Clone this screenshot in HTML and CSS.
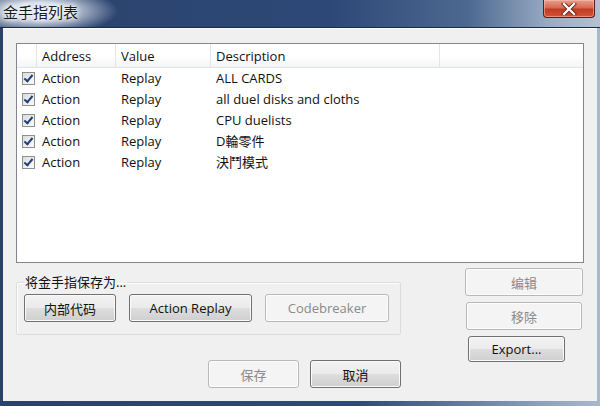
FILE: index.html
```html
<!DOCTYPE html>
<html lang="zh">
<head>
    <meta charset="UTF-8">
    <title>金手指列表</title>
    <link rel="stylesheet" href="styles.css">
</head>
<body>
    <div class="window">
        <div class="titlebar">
            <span class="title">金手指列表</span>
            <button class="close" aria-label="关闭">
                <svg width="16" height="12" viewBox="0 0 16 12">
                    <path d="M3 1 L13 11 M13 1 L3 11" stroke="#5a1a12" stroke-width="4" stroke-linecap="square"/>
                    <path d="M3 1 L13 11 M13 1 L3 11" stroke="#fff" stroke-width="2.4" stroke-linecap="square"/>
                </svg>
            </button>
        </div>

        <div class="client">
            <div class="list">
                <div class="list-head">
                    <div class="col col-check"></div>
                    <div class="col col-addr">Address</div>
                    <div class="col col-value">Value</div>
                    <div class="col col-desc">Description</div>
                    <div class="col col-rest"></div>
                </div>
                <div class="list-body" id="listBody"></div>
            </div>

            <div class="lower">
                <div class="lower-left">
                    <fieldset class="save-group">
                        <legend>将金手指保存为...</legend>
                        <button class="btn w-internal">内部代码</button>
                        <button class="btn w-ar">Action Replay</button>
                        <button class="btn w-cb" disabled>Codebreaker</button>
                    </fieldset>
                    <div class="dialog-actions">
                        <button class="btn w-small" disabled>保存</button>
                        <button class="btn w-small">取消</button>
                    </div>
                </div>
                <div class="side">
                    <button class="btn w-edit" disabled>编辑</button>
                    <button class="btn w-remove" disabled>移除</button>
                    <button class="btn w-export">Export...</button>
                </div>
            </div>
        </div>
    </div>

    <script>
        const cheats = [
            ['Action', 'Replay', 'ALL CARDS'],
            ['Action', 'Replay', 'all duel disks and cloths'],
            ['Action', 'Replay', 'CPU duelists'],
            ['Action', 'Replay', 'D輪零件'],
            ['Action', 'Replay', '決鬥模式']
        ];

        const body = document.getElementById('listBody');
        cheats.forEach(([addr, value, desc]) => {
            const row = document.createElement('div');
            row.className = 'row';
            row.innerHTML = `
                <div class="col col-check"><span class="check"></span></div>
                <div class="col col-addr">${addr}</div>
                <div class="col col-value">${value}</div>
                <div class="col col-desc">${desc}</div>`;
            body.appendChild(row);
        });
    </script>
</body>
</html>
```

FILE: styles.css
```css
body {
    margin: 0;
    width: 600px;
    height: 406px;
    overflow: hidden;
    font-family: 'Open Sans', 'Noto Sans CJK SC', sans-serif;
    font-size: 13px;
    color: #111;
}

.window {
    width: 600px;
    height: 406px;
    box-sizing: border-box;
    background: linear-gradient(90deg, #2a416b 0%, #2e4a78 60%, #8aa0bc 90%, #a9b9cc 100%);
    padding: 0 3px 5px 3px;
    display: flex;
    flex-direction: column;
}

.titlebar {
    height: 27px;
    display: flex;
    align-items: flex-start;
    justify-content: space-between;
    background:
        radial-gradient(ellipse 80px 24px at 38px 11px, rgba(225, 232, 240, 0.95) 35%, rgba(225, 232, 240, 0) 100%),
        linear-gradient(90deg, #2b426c 0%, #2d4877 55%, #4d6890 78%, #9aaec6 92%, #b3c1d2 100%);
    margin: 0 -3px;
    border-bottom: 1px solid #1b2b44;
}

.title {
    font-family: 'Noto Sans CJK SC', sans-serif;
    font-size: 15px;
    line-height: 20px;
    padding: 2px 0 0 3px;
    color: #1a1a1a;
    text-shadow: 0 0 6px #fff, 0 0 4px #fff;
}

.close {
    width: 52px;
    height: 18px;
    margin-right: 5px;
    padding: 0;
    border: 1px solid #5a1e18;
    border-top: none;
    border-radius: 0 0 4px 4px;
    background: linear-gradient(#e8a08c 0%, #d46a52 45%, #c33a22 55%, #d0543a 100%);
    display: flex;
    align-items: center;
    justify-content: center;
    box-shadow: inset 0 0 0 1px rgba(255, 200, 190, 0.5);
}

.client {
    flex: 1;
    background: #f0f0f0;
    border-top: 1px solid #fafafa;
    padding: 14px 13px 0 13px;
}

/* list view */
.list {
    height: 220px;
    box-sizing: border-box;
    border: 1px solid #82878f;
    background: #fff;
}

.list-head {
    display: flex;
    height: 23px;
    background: linear-gradient(#ffffff 0%, #ffffff 50%, #f4f5f6 100%);
    border-bottom: 1px solid #e1e3e6;
}

.list-head .col {
    border-right: 1px solid #e3e5e7;
    line-height: 21px;
    padding-top: 2px;
    padding-left: 5px;
}

.list-head .col-rest {
    border-right: none;
    flex: 1;
}

.col {
    box-sizing: border-box;
    white-space: nowrap;
}

.col-check { width: 20px; padding-left: 0 !important; }
.col-addr { width: 79px; }
.col-value { width: 95px; }
.col-desc { width: 229px; }

.row {
    display: flex;
    height: 21px;
    line-height: 21px;
}

.row .col { padding-left: 5px; }
.row .col-check {
    padding-left: 5px !important;
    display: flex;
    align-items: center;
}

.check {
    width: 11px;
    height: 11px;
    border: 1px solid #8e8f8f;
    background: linear-gradient(135deg, #dcdcdc, #fbfbfb);
    position: relative;
}

.check::after {
    content: '';
    position: absolute;
    left: 3px;
    top: 0px;
    width: 3px;
    height: 7px;
    border: solid #1e3f7a;
    border-width: 0 2px 2px 0;
    transform: rotate(40deg);
}

/* lower area */
.lower {
    display: flex;
    gap: 64px;
}

.lower-left {
    width: 385px;
}

.save-group {
    margin: 11px 0 0 0;
    padding: 0 0 12px 7px;
    border: 1px solid #dcdcdc;
    box-shadow: 1px 1px 0 #fff inset;
    border-radius: 2px;
    display: flex;
    gap: 13px;
    height: 61px;
    box-sizing: border-box;
    align-items: flex-end;
}

.save-group legend {
    padding: 0 1px;
    margin-left: 0;
    font-size: 13px;
    line-height: 16px;
}

.dialog-actions {
    display: flex;
    justify-content: flex-end;
    gap: 11px;
    margin-top: 25px;
}

.side {
    display: flex;
    flex-direction: column;
    align-items: flex-start;
    gap: 6px;
    padding-top: 5px;
    width: 118px;
}

.btn {
    font-family: 'Open Sans', 'Noto Sans CJK SC', sans-serif;
    font-size: 13px;
    color: #111;
    height: 28px;
    padding: 0;
    border: 1px solid #707070;
    border-radius: 3px;
    background: linear-gradient(#f2f2f2 0%, #ebebeb 48%, #dddddd 52%, #cfcfcf 100%);
    box-shadow: inset 0 0 0 1px #fbfbfb;
}

.btn:disabled {
    color: #8a8a8a;
    border-color: #b5b9bc;
    background: #f4f4f4;
    box-shadow: inset 0 0 0 1px #fdfdfd;
}

.w-internal { width: 92px; }
.w-ar { width: 123px; }
.w-cb { width: 124px; }
.w-small { width: 91px; }
.w-edit { width: 118px; }
.w-remove { width: 116px; margin-left: 1px; }
.w-export { width: 97px; height: 26px; margin-left: 3px; }
```
